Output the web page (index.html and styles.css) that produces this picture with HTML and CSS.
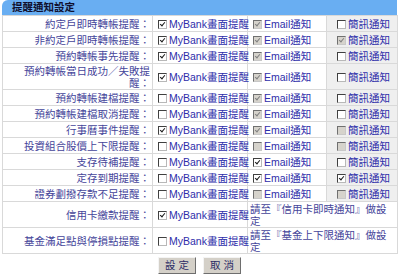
FILE: index.html
```html
<!DOCTYPE html>
<html lang="zh-Hant">

<head>
    <meta charset="UTF-8">
    <title>提醒通知設定</title>
    <link rel="stylesheet" href="styles.css">
</head>

<body>
    <div class="panel">
        <div class="panel-head">提醒通知設定</div>
        <table class="notify">
            <colgroup>
                <col class="c-label">
                <col class="c-app">
                <col class="c-mail">
                <col class="c-sms">
            </colgroup>
            <tr>
                <td class="label">約定戶即時轉帳提醒：</td>
                <td><label><input type="checkbox" checked>MyBank畫面提醒</label></td>
                <td><label><input type="checkbox" checked disabled>Email通知</label></td>
                <td class="sms"><label><input type="checkbox">簡訊通知</label></td>
            </tr>
            <tr>
                <td class="label">非約定戶即時轉帳提醒：</td>
                <td><label><input type="checkbox" checked>MyBank畫面提醒</label></td>
                <td><label><input type="checkbox" checked disabled>Email通知</label></td>
                <td class="sms"><label><input type="checkbox" checked disabled>簡訊通知</label></td>
            </tr>
            <tr>
                <td class="label">預約轉帳事先提醒：</td>
                <td><label><input type="checkbox" checked>MyBank畫面提醒</label></td>
                <td><label><input type="checkbox" checked disabled>Email通知</label></td>
                <td class="sms"><label><input type="checkbox">簡訊通知</label></td>
            </tr>
            <tr>
                <td class="label">預約轉帳當日成功／失敗提醒：</td>
                <td><label><input type="checkbox" checked>MyBank畫面提醒</label></td>
                <td><label><input type="checkbox" checked disabled>Email通知</label></td>
                <td class="sms"><label><input type="checkbox">簡訊通知</label></td>
            </tr>
            <tr>
                <td class="label">預約轉帳建檔提醒：</td>
                <td><label><input type="checkbox">MyBank畫面提醒</label></td>
                <td><label><input type="checkbox" checked disabled>Email通知</label></td>
                <td class="sms"><label><input type="checkbox">簡訊通知</label></td>
            </tr>
            <tr>
                <td class="label">預約轉帳建檔取消提醒：</td>
                <td><label><input type="checkbox">MyBank畫面提醒</label></td>
                <td><label><input type="checkbox" checked disabled>Email通知</label></td>
                <td class="sms"><label><input type="checkbox">簡訊通知</label></td>
            </tr>
            <tr>
                <td class="label">行事曆事件提醒：</td>
                <td><label><input type="checkbox" checked>MyBank畫面提醒</label></td>
                <td><label><input type="checkbox" checked disabled>Email通知</label></td>
                <td class="sms"><label><input type="checkbox" disabled>簡訊通知</label></td>
            </tr>
            <tr>
                <td class="label">投資組合股價上下限提醒：</td>
                <td><label><input type="checkbox">MyBank畫面提醒</label></td>
                <td><label><input type="checkbox" disabled>Email通知</label></td>
                <td class="sms"><label><input type="checkbox" disabled>簡訊通知</label></td>
            </tr>
            <tr>
                <td class="label">支存待補提醒：</td>
                <td><label><input type="checkbox">MyBank畫面提醒</label></td>
                <td><label><input type="checkbox" checked>Email通知</label></td>
                <td class="sms"><label><input type="checkbox">簡訊通知</label></td>
            </tr>
            <tr>
                <td class="label">定存到期提醒：</td>
                <td><label><input type="checkbox">MyBank畫面提醒</label></td>
                <td><label><input type="checkbox" checked>Email通知</label></td>
                <td class="sms"><label><input type="checkbox" checked>簡訊通知</label></td>
            </tr>
            <tr>
                <td class="label">證券劃撥存款不足提醒：</td>
                <td><label><input type="checkbox">MyBank畫面提醒</label></td>
                <td><label><input type="checkbox" disabled>Email通知</label></td>
                <td class="sms"><label><input type="checkbox" disabled>簡訊通知</label></td>
            </tr>
            <tr>
                <td class="label">信用卡繳款提醒：</td>
                <td><label><input type="checkbox" checked>MyBank畫面提醒</label></td>
                <td class="note" colspan="2">請至『信用卡即時通知』做設定</td>
            </tr>
            <tr>
                <td class="label">基金滿足點與停損點提醒：</td>
                <td><label><input type="checkbox">MyBank畫面提醒</label></td>
                <td class="note" colspan="2">請至『基金上下限通知』做設定</td>
            </tr>
        </table>

        <div class="actions">
            <button type="button">設 定</button>
            <button type="button">取 消</button>
        </div>
    </div>
</body>

</html>
```

FILE: styles.css
```css
body {
    margin: 0;
    padding: 0 3px 0 2px;
    background-color: white;
    font-family: "Liberation Sans", "Noto Sans CJK TC", sans-serif;
    font-size: 10.5px;
}

.panel {
    width: 395px;
}

.panel-head {
    height: 15px;
    line-height: 15px;
    padding-left: 10px;
    background-color: #69aef2;
    border-radius: 6px 0 0 0;
    color: #10102e;
    font-weight: bold;
}

table.notify {
    width: 395px;
    border-collapse: collapse;
    table-layout: fixed;
}

col.c-label {
    width: 150px;
}

col.c-app {
    width: 95px;
}

col.c-mail {
    width: 79px;
}

col.c-sms {
    width: 71px;
}

.notify td {
    border: 1px solid #d9d9d9;
    padding: 1px 2px 0;
    height: 14px;
    line-height: 12px;
    color: #2e2eaa;
    vertical-align: middle;
    white-space: nowrap;
}

.notify td.label,
.notify td.note {
    color: #45459a;
    white-space: normal;
}

.notify td.label {
    text-align: right;
}

.notify td.sms {
    background-color: #efefef;
    text-align: center;
}

.notify input[type=checkbox] {
    appearance: none;
    position: relative;
    box-sizing: border-box;
    width: 9px;
    height: 9px;
    margin: 0 2px 0 3px;
    border: 1px solid;
    border-color: #404040 #b8b8b8 #b8b8b8 #404040;
    background-color: white;
    vertical-align: -1px;
}

.notify input[type=checkbox]:disabled {
    background-color: #d6d3cc;
    border-color: #707070 #c8c8c8 #c8c8c8 #707070;
}

.notify input[type=checkbox]:checked::after {
    content: "";
    position: absolute;
    left: 2px;
    top: 0;
    width: 2px;
    height: 4px;
    border: solid #1a1a1a;
    border-width: 0 1.5px 1.5px 0;
    transform: rotate(40deg);
}

.notify input[type=checkbox]:disabled:checked::after {
    border-color: #808080;
}

.actions {
    padding-top: 3px;
    text-align: center;
}

.actions button {
    width: 38px;
    height: 17px;
    margin: 0 2px;
    padding: 0;
    border: 1px solid;
    border-color: #f4f4f4 #6e6e6e #6e6e6e #f4f4f4;
    background-color: #d4d0c8;
    color: #2c2c66;
    font-family: inherit;
    font-size: 10.5px;
    line-height: 15px;
}
```
